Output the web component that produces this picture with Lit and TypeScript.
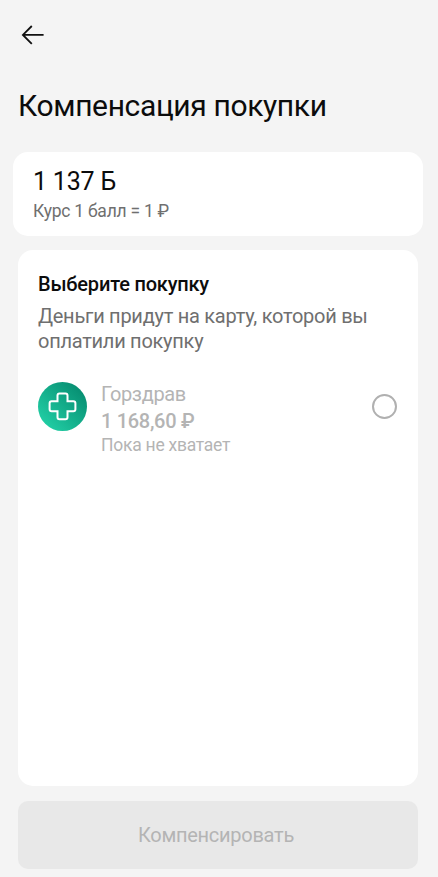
import { LitElement, html, css } from "lit";
import { customElement } from "lit/decorators.js";

@customElement("app-root")
export class AppRoot extends LitElement {
  static styles = css`
    :host {
      display: flex;
      flex-direction: column;
      box-sizing: border-box;
      width: 438px;
      height: 877px;
      background: #f4f4f4;
      padding: 0 20px 8px 18px;
      font-family: Roboto, "Noto Sans", sans-serif;
      color: #0c0c0c;
      overflow: hidden;
    }
    header { height: 70px; display: flex; align-items: center; padding-left: 3px; box-sizing: border-box; }
    h1 { margin: 18px 0 0; font-size: 30px; line-height: 36px; font-weight: 400; letter-spacing: -0.36px; white-space: nowrap; }
    .balance {
      box-sizing: border-box; height: 84px; margin: 28px -5px 0 -5px; padding: 14px 20px 0;
      background: #fff; border-radius: 15px;
    }
    .points { font-size: 25px; line-height: 32px; letter-spacing: -0.2px; }
    .rate { font-size: 17.5px; line-height: 22px; margin-top: 2px; letter-spacing: -0.25px; color: #6f6f6f; }
    .card { box-sizing: border-box; height: 536px; margin-top: 14px; padding: 21px 20px; background: #fff; border-radius: 15px; }
    h2 { margin: 0; font-size: 20px; line-height: 26px; font-weight: 500; letter-spacing: -0.2px; }
    .hint { margin: 7px 0 0; font-size: 20px; line-height: 24.5px; letter-spacing: -0.26px; color: #6f6f6f; white-space: nowrap; }
    .item { display: flex; margin-top: 29px; color: #b4b4b4; }
    .info { flex: 1; margin: -1px 0 0 14px; }
    .name { font-size: 20px; line-height: 26px; letter-spacing: -0.35px; }
    .price { padding-top: 1px; font-size: 20px; line-height: 26px; font-weight: 500; letter-spacing: -0.3px; }
    .note { font-size: 17.5px; line-height: 22px; letter-spacing: -0.25px; }
    .radio { box-sizing: border-box; width: 25px; height: 25px; margin: 12px 1px 0 0; border: 2px solid #b0b0b0; border-radius: 50%; }
    .submit {
      height: 68px; margin-top: 15px; padding: 0 4px 0 0; border: 0; border-radius: 10px; background: #e8e8e8;
      color: #b4b4b4; font: 400 20px/24px Roboto, sans-serif; letter-spacing: -0.27px;
    }
    svg { display: block; flex: none; }
  `;

  render() {
    return html`
      <header>
        <svg width="24" height="22" viewBox="0 0 24 22" fill="none" stroke="#111" stroke-width="1.8">
          <path d="M10.8 2 1.9 10.9l8.9 8.9M1.9 10.9h20.7" />
        </svg>
      </header>
      <h1><span class="title">Компенсация покупки</span></h1>
      <section class="balance">
        <div class="points"><span>1 137 Б</span></div>
        <div class="rate"><span>Курс 1 балл = 1 ₽</span></div>
      </section>
      <section class="card">
        <h2><span>Выберите покупку</span></h2>
        <p class="hint"><span>Деньги придут на карту, которой вы<br />оплатили покупку</span></p>
        <div class="item">
          <svg width="49" height="49" viewBox="0 0 49 49" fill="none">
            <defs>
              <linearGradient id="g" x1="0.1" y1="0.9" x2="0.9" y2="0.1">
                <stop stop-color="#22d0a6" /><stop offset="1" stop-color="#068c70" />
              </linearGradient>
            </defs>
            <circle cx="24.5" cy="24.5" r="24.5" fill="url(#g)" />
            <path d="M21.5 11.4h6a2 2 0 0 1 2 2v5.9h5.9a2 2 0 0 1 2 2v6a2 2 0 0 1-2 2h-5.9v5.9a2 2 0 0 1-2 2h-6a2 2 0 0 1-2-2v-5.9h-5.9a2 2 0 0 1-2-2v-6a2 2 0 0 1 2-2h5.9v-5.9a2 2 0 0 1 2-2z" stroke="#fff" stroke-width="2" />
          </svg>
          <div class="info">
            <div class="name"><span>Горздрав</span></div>
            <div class="price"><span>1 168,60 ₽</span></div>
            <div class="note"><span>Пока не хватает</span></div>
          </div>
          <div class="radio"></div>
        </div>
      </section>
      <button class="submit"><span>Компенсировать</span></button>
    `;
  }
}
